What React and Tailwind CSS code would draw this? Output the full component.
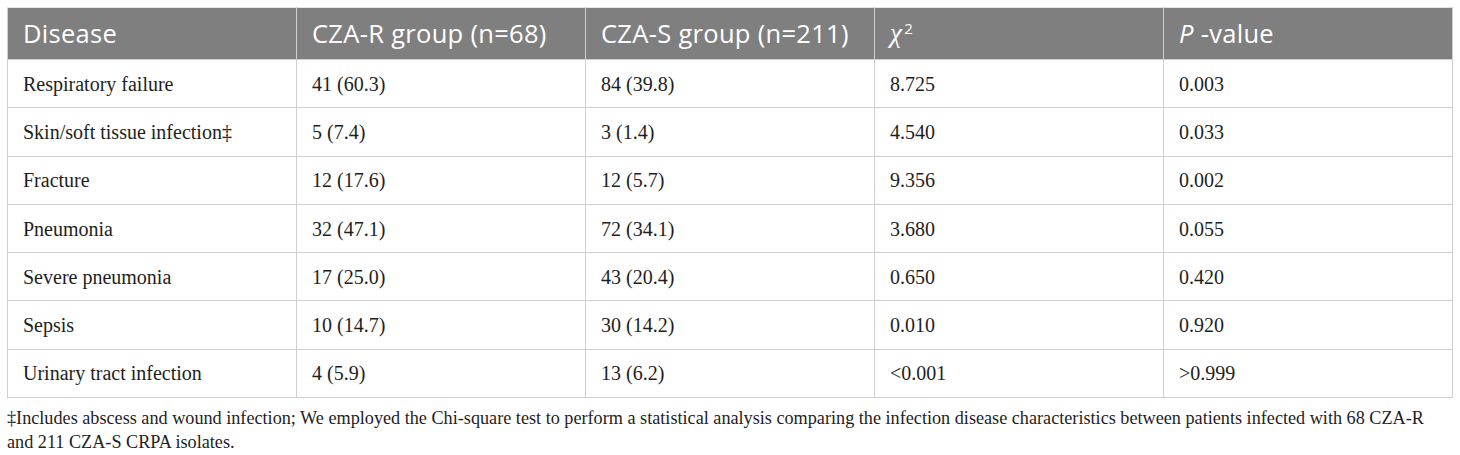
import React from "react";

const rows = [
  ["Respiratory failure", "41 (60.3)", "84 (39.8)", "8.725", "0.003"],
  ["Skin/soft tissue infection‡", "5 (7.4)", "3 (1.4)", "4.540", "0.033"],
  ["Fracture", "12 (17.6)", "12 (5.7)", "9.356", "0.002"],
  ["Pneumonia", "32 (47.1)", "72 (34.1)", "3.680", "0.055"],
  ["Severe pneumonia", "17 (25.0)", "43 (20.4)", "0.650", "0.420"],
  ["Sepsis", "10 (14.7)", "30 (14.2)", "0.010", "0.920"],
  ["Urinary tract infection", "4 (5.9)", "13 (6.2)", "<0.001", ">0.999"],
];

export default function App() {
  return (
    <div className="w-[1460px] h-[455px] bg-white pt-[7px] pl-[7px]">
      <table className="w-[1446px] border-collapse table-fixed">
        <thead>
          <tr className="bg-[#7f7f7f] text-white h-[52px] text-[25.5px] tracking-[0.3px] [font-family:'Open_Sans',sans-serif]">
            <th className="w-1/5 text-left font-normal pl-[15px] border border-[#cfcfcf] border-t-[#e3e3e3]">Disease</th>
            <th className="w-1/5 text-left font-normal pl-[15px] border border-[#cfcfcf] border-t-[#e3e3e3]">CZA-R group (n=68)</th>
            <th className="w-1/5 text-left font-normal pl-[15px] border border-[#cfcfcf] border-t-[#e3e3e3]">CZA-S group (n=211)</th>
            <th className="w-1/5 text-left font-normal pl-[15px] border border-[#cfcfcf] border-t-[#e3e3e3]">
              <span className="[font-family:'Liberation_Serif',serif] italic text-[27px]">χ</span>
              <sup className="text-[15px] relative -top-[8px] ml-[2px]">2</sup>
            </th>
            <th className="w-1/5 text-left font-normal pl-[15px] border border-[#cfcfcf] border-t-[#e3e3e3]">
              <span className="italic">P</span> -value
            </th>
          </tr>
        </thead>
        <tbody className="text-[20px] text-[#1e1e1e] [font-family:'Liberation_Serif',serif]">
          {rows.map((r, i) => (
            <tr key={i} className="h-[48.3px]">
              {r.map((c, j) => (
                <td key={j} className="pl-[15px] border border-[#cfcfcf]">{c}</td>
              ))}
            </tr>
          ))}
        </tbody>
      </table>
      <p className="mt-[8px] w-[1440px] text-[18.2px] leading-[24px] text-[#1e1e1e] [font-family:'Liberation_Serif',serif]">
        ‡Includes abscess and wound infection; We employed the Chi-square test to perform a statistical analysis comparing the infection disease characteristics between patients infected with 68 <span className="whitespace-nowrap">CZA-R</span> and 211 <span className="whitespace-nowrap">CZA-S</span> CRPA isolates.
      </p>
    </div>
  );
}
